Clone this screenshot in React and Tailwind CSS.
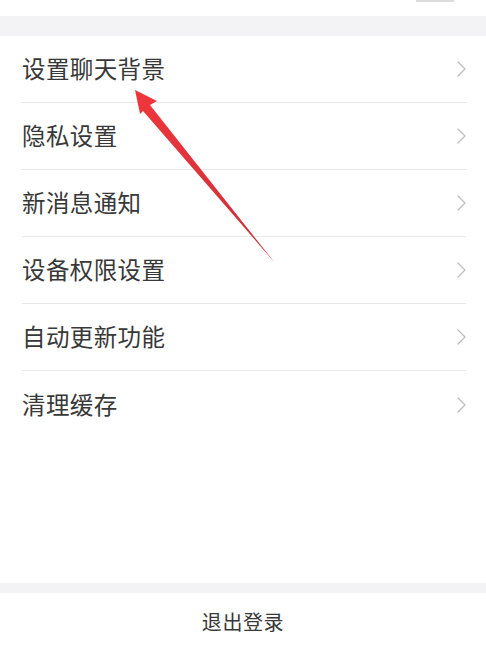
const items = ["设置聊天背景", "隐私设置", "新消息通知", "设备权限设置", "自动更新功能", "清理缓存"];

function Chevron() {
  return (
    <svg width="9" height="16" viewBox="0 0 9 16" fill="none" className="shrink-0">
      <path d="M1 1l7 7-7 7" stroke="#bdbdbd" strokeWidth="1.2" strokeLinecap="round" strokeLinejoin="round" />
    </svg>
  );
}

export default function App() {
  return (
    <div
      className="relative h-[649px] w-[486px] overflow-hidden bg-white text-[#383838]"
      style={{ fontFamily: '"Noto Sans CJK SC", "Noto Sans", sans-serif' }}
    >
      <div className="relative h-[16px] bg-white">
        <div className="absolute right-[32px] top-0 h-[2px] w-[38px] bg-[#dcdcdc]" />
      </div>
      <div className="h-[20px] bg-[#f3f3f5]" />

      <ul>
        {items.map((label, i) => (
          <li key={label} className="pl-[22px] pr-[20px]">
            <div
              className={
                "flex h-[67px] items-center justify-between " +
                (i < items.length - 1 ? "border-b border-[#e8e8e8]" : "")
              }
            >
              <span className="text-[23.5px] leading-none tracking-[0.4px]">{label}</span>
              <Chevron />
            </div>
          </li>
        ))}
      </ul>

      <div className="h-[145px]" />
      <div className="h-[10px] bg-[#f3f3f5]" />
      <div className="flex h-[64px] items-start justify-center pt-[19px]">
        <span className="text-[20px] leading-none tracking-[0.6px]">退出登录</span>
      </div>

      <svg className="pointer-events-none absolute left-0 top-0" width="486" height="649" viewBox="0 0 486 649">
        <defs>
          <linearGradient id="ar" x1="0" y1="0" x2="1" y2="1">
            <stop offset="0" stopColor="#f0363c" />
            <stop offset="1" stopColor="#c9303a" />
          </linearGradient>
        </defs>
        <path d="M135 90 L157 101 L150 105 L275 263 L143 111 L140 114 Z" fill="url(#ar)" />
      </svg>
    </div>
  );
}
